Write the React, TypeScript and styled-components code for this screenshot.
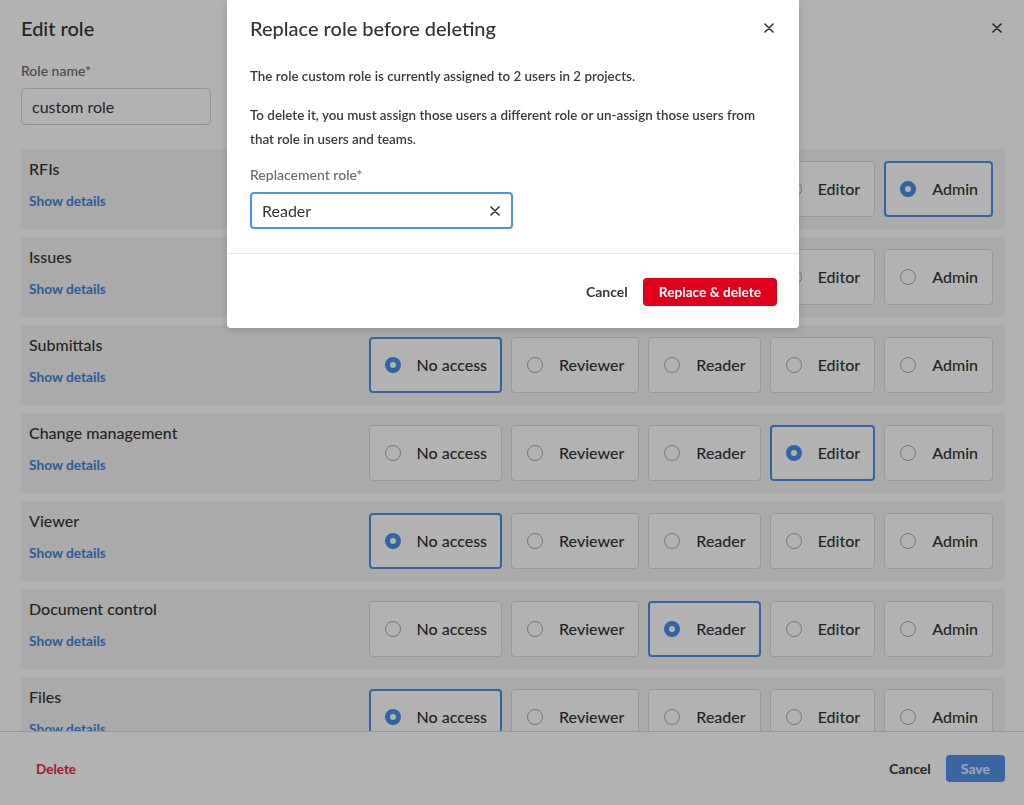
import React from "react";
import styled, { createGlobalStyle, css } from "styled-components";

const Global = createGlobalStyle`
  html, body { margin: 0; padding: 0; background: #ffffff; }
  body { font-family: Lato, "Noto Sans", Arial, sans-serif; color: #3a3a3a; -webkit-font-smoothing: antialiased; }
  * { box-sizing: border-box; }
`;

const Page = styled.div`
  height: 805px;
  display: flex;
  flex-direction: column;
  background: #ffffff;
  overflow: hidden;
`;

const Header = styled.header`
  height: 58px;
  flex: none;
  display: flex;
  align-items: center;
  justify-content: space-between;
  padding: 0 19px 2px 21px;
`;

const PageTitle = styled.h1`
  margin: 0;
  font-size: 20px;
  font-weight: 500;
  color: #333;
  line-height: 26px;
`;

const IconButton = styled.button`
  border: 0;
  background: transparent;
  padding: 0;
  width: 16px;
  height: 16px;
  display: flex;
  align-items: center;
  justify-content: center;
  color: #333;
  cursor: pointer;
`;

const Content = styled.main`
  flex: 1;
  min-height: 0;
  overflow: hidden;
  padding: 4px 19px 0 21px;
`;

const FieldLabel = styled.label`
  display: block;
  font-size: 14px;
  line-height: 18px;
  font-weight: 500;
  color: #6a6a6a;
`;

const NameInput = styled.div`
  margin-top: 8px;
  width: 190px;
  height: 37px;
  border: 1px solid #d3d3d3;
  border-radius: 4px;
  display: flex;
  align-items: center;
  padding: 0 10px;
  font-size: 16px;
  color: #333;
  background: #fff;
`;

const Rows = styled.div`
  margin-top: 24px;
  display: flex;
  flex-direction: column;
  gap: 8px;
`;

const Row = styled.section`
  height: 80px;
  flex: none;
  background: #f4f4f4;
  border-radius: 4px;
  display: flex;
  justify-content: space-between;
  align-items: center;
  padding: 0 12px 0 8px;
`;

const RowInfo = styled.div`
  align-self: stretch;
  display: flex;
  flex-direction: column;
  align-items: flex-start;
  padding-top: 10px;
  gap: 13px;
`;

const RowTitle = styled.div`
  font-size: 16px;
  line-height: 20px;
  font-weight: 500;
  color: #333;
`;

const DetailsLink = styled.a`
  font-size: 13.7px;
  line-height: 18px;
  font-weight: 700;
  color: #3d86e0;
  text-decoration: none;
`;

const Options = styled.div`
  display: flex;
  gap: 9px;
  margin-top: -1px;
`;

const OptionCard = styled.label<{ $selected: boolean }>`
  height: 56px;
  display: flex;
  align-items: center;
  gap: 16px;
  padding: 0 14px 0 15px;
  background: #fff;
  border-radius: 4px;
  border: 1px solid #dcdcdc;
  font-size: 16px;
  font-weight: 500;
  color: #333;
  ${(p) =>
    p.$selected &&
    css`
      border: 2px solid #4590ec;
      padding: 0 13px 0 14px;
    `}
`;

const Radio = styled.span<{ $selected: boolean }>`
  width: 16px;
  height: 16px;
  border-radius: 50%;
  flex: none;
  border: 1.5px solid #a8a8a8;
  background: #fff;
  ${(p) =>
    p.$selected &&
    css`
      border: 5px solid #4590ec;
    `}
`;

const Footer = styled.footer`
  height: 74px;
  flex: none;
  border-top: 1px solid #d8d8d8;
  display: flex;
  align-items: center;
  justify-content: space-between;
  padding: 0 19px 0 21px;
  background: #fff;
`;

const TextButton = styled.button<{ $danger?: boolean }>`
  border: 0;
  background: transparent;
  font-family: inherit;
  font-size: ${(p) => (p.$danger ? "13.5px" : "14px")};
  font-weight: 700;
  padding: 6px 15px;
  color: ${(p) => (p.$danger ? "#e8283f" : "#363636")};
  cursor: pointer;
`;

const FooterActions = styled.div`
  display: flex;
  align-items: center;
`;

const PrimaryButton = styled.button<{ $tone: "blue" | "red" }>`
  border: 0;
  border-radius: 4px;
  font-family: inherit;
  font-size: ${(p) => (p.$tone === "red" ? "13.7px" : "14px")};
  font-weight: 700;
  height: ${(p) => (p.$tone === "red" ? "28px" : "27px")};
  padding: 0 ${(p) => (p.$tone === "red" ? "16px" : "15px")};
  color: ${(p) => (p.$tone === "red" ? "#ffffff" : "#e6eef9")};
  background: ${(p) => (p.$tone === "red" ? "#e0001b" : "#5391e9")};
  cursor: pointer;
`;

const Overlay = styled.div`
  position: fixed;
  inset: 0;
  background: rgba(0, 0, 0, 0.3);
`;

const Modal = styled.div`
  position: fixed;
  top: 0;
  left: 227px;
  width: 572px;
  background: #fff;
  border-radius: 0 0 4px 4px;
  box-shadow: 0 2px 8px rgba(0, 0, 0, 0.18);
`;

const ModalHeader = styled.div`
  height: 56px;
  display: flex;
  align-items: center;
  justify-content: space-between;
  padding: 0 22px 1px 23px;
`;

const ModalTitle = styled.h2`
  margin: 0;
  font-size: 20px;
  line-height: 26px;
  font-weight: 500;
  color: #333;
`;

const ModalBody = styled.div`
  padding: 8px 23px 24px 23px;
`;

const Paragraph = styled.p`
  margin: 0 0 15px;
  font-size: 13.4px;
  line-height: 24px;
  font-weight: 600;
  color: #3a3a3a;
`;

const ReplaceInput = styled.div`
  margin-top: 8px;
  width: 263px;
  height: 37px;
  border: 2px solid #4a93ea;
  border-radius: 4px;
  display: flex;
  align-items: center;
  justify-content: space-between;
  padding: 0 11px 0 10px;
  font-size: 16px;
  color: #333;
`;

const ModalFooter = styled.div`
  border-top: 1px solid #e6e6e6;
  display: flex;
  justify-content: flex-end;
  align-items: center;
  padding: 23px 22px 22px;
`;

const Close = () => (
  <svg width="10" height="10" viewBox="0 0 10 10" fill="none" stroke="currentColor" strokeWidth="1.6" strokeLinecap="round">
    <path d="M1 1l8 8M9 1l-8 8" />
  </svg>
);

const levels = ["No access", "Reviewer", "Reader", "Editor", "Admin"];
const rows: [string, string][] = [
  ["RFIs", "Admin"],
  ["Issues", ""],
  ["Submittals", "No access"],
  ["Change management", "Editor"],
  ["Viewer", "No access"],
  ["Document control", "Reader"],
  ["Files", "No access"],
];

export default function App() {
  return (
    <>
      <Global />
      <Page>
        <Header>
          <PageTitle>Edit role</PageTitle>
          <IconButton aria-label="Close"><Close /></IconButton>
        </Header>
        <Content>
          <FieldLabel>Role name*</FieldLabel>
          <NameInput>custom role</NameInput>
          <Rows>
            {rows.map(([name, sel]) => (
              <Row key={name}>
                <RowInfo>
                  <RowTitle>{name}</RowTitle>
                  <DetailsLink href="#">Show details</DetailsLink>
                </RowInfo>
                <Options>
                  {levels.map((l) => (
                    <OptionCard key={l} $selected={l === sel}>
                      <Radio $selected={l === sel} />
                      {l}
                    </OptionCard>
                  ))}
                </Options>
              </Row>
            ))}
          </Rows>
        </Content>
        <Footer>
          <TextButton $danger>Delete</TextButton>
          <FooterActions>
            <TextButton>Cancel</TextButton>
            <PrimaryButton $tone="blue">Save</PrimaryButton>
          </FooterActions>
        </Footer>
      </Page>
      <Overlay />
      <Modal>
        <ModalHeader>
          <ModalTitle>Replace role before deleting</ModalTitle>
          <IconButton aria-label="Close"><Close /></IconButton>
        </ModalHeader>
        <ModalBody>
          <Paragraph>The role custom role is currently assigned to 2 users in 2 projects.</Paragraph>
          <Paragraph>
            To delete it, you must assign those users a different role or un-assign those users from that role in users and teams.
          </Paragraph>
          <FieldLabel>Replacement role*</FieldLabel>
          <ReplaceInput>
            Reader
            <Close />
          </ReplaceInput>
        </ModalBody>
        <ModalFooter>
          <TextButton>Cancel</TextButton>
          <PrimaryButton $tone="red">Replace &amp; delete</PrimaryButton>
        </ModalFooter>
      </Modal>
    </>
  );
}
